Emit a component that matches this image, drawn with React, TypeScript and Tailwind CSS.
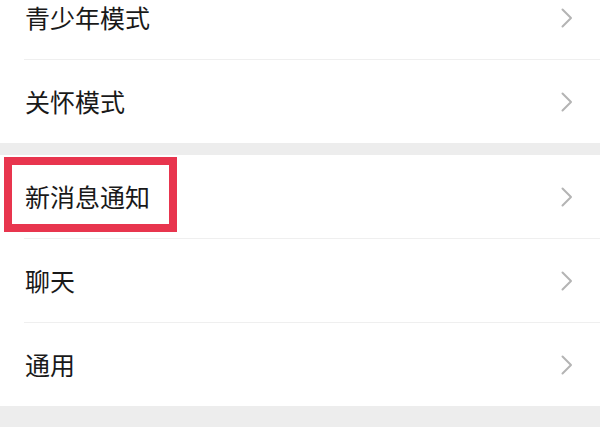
import React from "react";

function Chevron() {
  return (
    <svg width="12" height="20" viewBox="0 0 12 20" fill="none">
      <path d="M1.5 1.5 L10 10 L1.5 18.5" stroke="#b4b4b4" strokeWidth="2" strokeLinecap="round" strokeLinejoin="round" />
    </svg>
  );
}

function Row({ label, highlight }: { label: string; highlight?: boolean }) {
  return (
    <div className="relative h-[83px] flex items-center justify-between pl-[25px] pr-[27px] bg-white">
      <span className="text-[25px] leading-none text-[#191919]">{label}</span>
      <Chevron />
      {highlight && (
        <div className="absolute left-[4px] top-[2px] w-[173px] h-[75px] border-[8px] border-[#e8354e]" />
      )}
    </div>
  );
}

function Divider() {
  return (
    <div className="bg-white">
      <div className="ml-[24px] h-px bg-[#efefef]" />
    </div>
  );
}

export default function App() {
  return (
    <div
      className="w-[600px] h-[427px] overflow-hidden bg-[#ededed]"
      style={{ fontFamily: '"Noto Sans CJK SC", "Noto Sans", sans-serif' }}
    >
      <div className="-mt-[24px]">
        <Row label="青少年模式" />
        <Divider />
        <Row label="关怀模式" />
      </div>
      <div className="h-[12px]" />
      <div>
        <Row label="新消息通知" highlight />
        <Divider />
        <Row label="聊天" />
        <Divider />
        <Row label="通用" />
      </div>
    </div>
  );
}
